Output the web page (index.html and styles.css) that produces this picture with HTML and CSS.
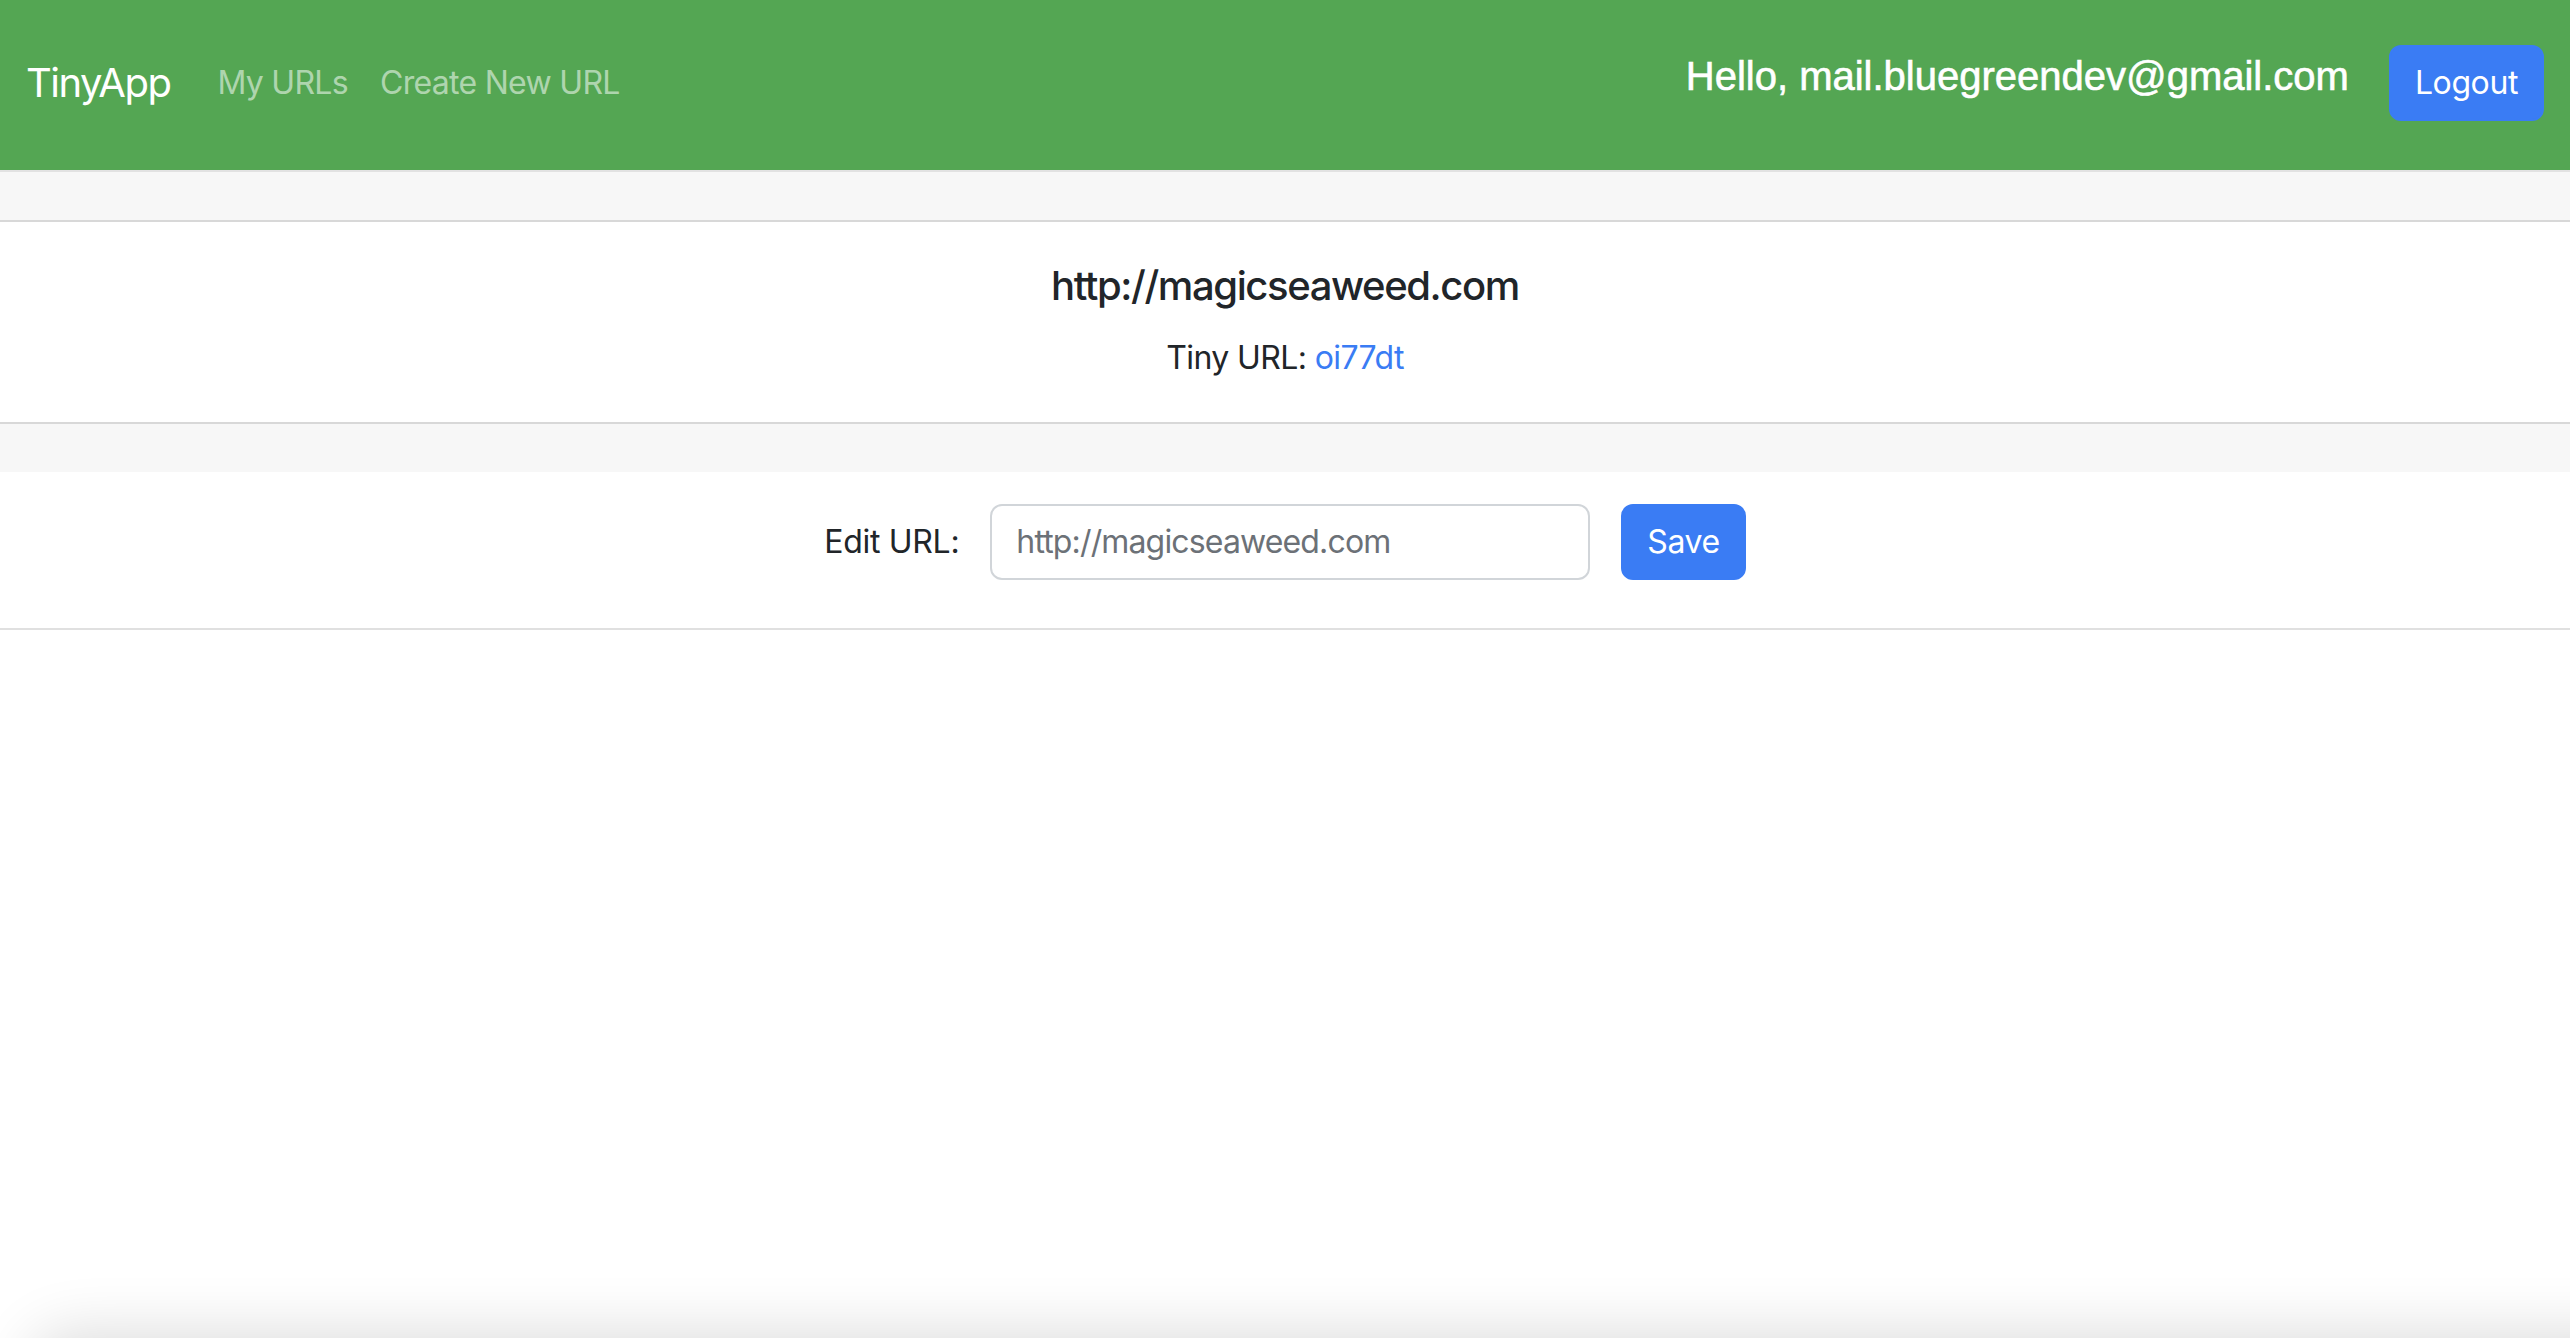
FILE: index.html
```html
<!DOCTYPE html>
<html lang="en">
<head>
<meta charset="utf-8">
<title>TinyApp</title>
<link rel="stylesheet" href="styles.css">
</head>
<body>
<nav class="navbar">
  <a class="brand" href="#">TinyApp</a>
  <ul class="nav-links">
    <li><a class="nav-link" href="#">My URLs</a></li>
    <li><a class="nav-link" href="#">Create New URL</a></li>
  </ul>
  <div class="nav-right">
    <span class="hello">Hello, mail.bluegreendev@gmail.com</span>
    <button class="btn" type="button">Logout</button>
  </div>
</nav>
<main class="card">
  <div class="card-header"></div>
  <div class="card-body">
    <h5 class="card-title">http://magicseaweed.com</h5>
    <p class="card-text">Tiny URL: <a class="link" href="#">oi77dt</a></p>
  </div>
  <div class="card-footer"></div>
  <form class="edit-form">
    <label class="edit-label" for="longURL">Edit URL:</label>
    <input class="form-control" id="longURL" type="text" value="http://magicseaweed.com">
    <button class="btn" type="submit">Save</button>
  </form>
</main>
<div class="window-shadow"></div>
</body>
</html>
```
FILE: styles.css
```css
* { box-sizing: border-box; }
html, body { margin: 0; padding: 0; background: #fff; }
body {
  font-family: Inter, "Noto Sans", sans-serif;
  color: #212529;
  font-size: 32px;
  line-height: 1.5;
  letter-spacing: -0.6px;
  overflow: hidden;
  height: 1338px;
}
a { text-decoration: none; }

.navbar {
  height: 170px;
  background: #54a653;
  display: flex;
  align-items: center;
  padding: 0 26px 4px 26px;
}
.brand {
  color: #fff;
  font-size: 40px;
  line-height: 1.5;
  letter-spacing: -1.5px;
  margin-right: 31px;
}
.nav-links {
  list-style: none;
  display: flex;
  margin: 0;
  padding: 0;
}
.nav-link {
  display: block;
  padding: 0 16px;
  color: rgba(255,255,255,0.55);
  font-size: 32px;
  letter-spacing: -0.7px;
}
.nav-right {
  margin-left: auto;
  display: flex;
  align-items: center;
  gap: 40px;
}
.hello {
  font-family: "Liberation Sans", Arial, sans-serif;
  color: #fff;
  font-size: 40px;
  line-height: 1.2;
  letter-spacing: 0;
  -webkit-text-stroke: 0.6px #fff;
  padding-bottom: 14px;
}
.btn {
  font-family: Inter, "Noto Sans", sans-serif;
  font-size: 32px;
  line-height: 48px;
  letter-spacing: -0.4px;
  padding: 12px 24px;
  border: 2px solid #3a7cf4;
  background: #3a7cf4;
  color: #fff;
  border-radius: 12px;
  cursor: pointer;
}

.card {
  border-top: 2px solid #e2e2e2;
  text-align: center;
}
.card-header {
  height: 50px;
  background: #f7f7f7;
  border-bottom: 2px solid #d8d8d8;
}
.card-body {
  padding: 40px 0 40px 0;
}
.card-title {
  margin: 0 0 24px 0;
  font-size: 40px;
  font-weight: 500;
  line-height: 48px;
  letter-spacing: -1.4px;
}
.card-text {
  margin: 0;
  font-size: 32px;
  line-height: 48px;
}
.link { color: #3a7cf4; }
.card-footer {
  height: 50px;
  background: #f7f7f7;
  border-top: 2px solid #d8d8d8;
}
.edit-form {
  display: flex;
  justify-content: center;
  align-items: center;
  gap: 31px;
  padding: 32px 0 48px 0;
  border-bottom: 2px solid #e0e0e0;
  margin: 0;
}
.edit-label {
  font-size: 32px;
  line-height: 48px;
  letter-spacing: -0.3px;
}
.form-control {
  width: 600px;
  font-family: Inter, "Noto Sans", sans-serif;
  font-size: 32px;
  line-height: 48px;
  letter-spacing: -0.85px;
  padding: 12px 24px;
  border: 2px solid #d1d5d9;
  border-radius: 12px;
  color: #6c7177;
  background: #fff;
}

.window-shadow {
  position: fixed;
  left: 30px;
  right: -200px;
  bottom: -120px;
  height: 120px;
  border-radius: 40px;
  box-shadow: 0 -6px 60px rgba(0,0,0,0.14);
}
```
